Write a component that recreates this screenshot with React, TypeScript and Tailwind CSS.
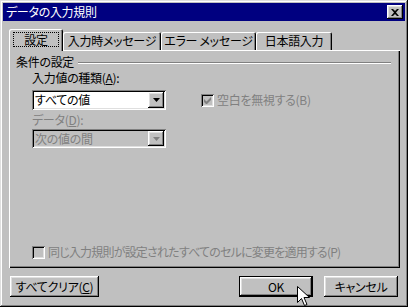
import React from "react";

const raised =
  "shadow-[inset_-1px_-1px_#000000,inset_1px_1px_#ffffff,inset_-2px_-2px_#808080,inset_2px_2px_#dfdfdf]";
const sunken =
  "shadow-[inset_1px_1px_#808080,inset_-1px_-1px_#ffffff,inset_2px_2px_#000000,inset_-2px_-2px_#dfdfdf]";

function Arrow({ disabled }: { disabled?: boolean }) {
  return (
    <svg width="7" height="4" viewBox="0 0 7 4">
      <path d="M0 0h7L3.5 4z" fill={disabled ? "#808080" : "#000"} />
    </svg>
  );
}

function Combo({ value, disabled }: { value: string; disabled?: boolean }) {
  return (
    <div
      className={`w-[134px] flex items-center p-[2px] ${sunken} ${
        disabled ? "h-[19px] bg-[#c0c0c0] text-[#808080]" : "h-[20px] bg-white text-black"
      }`}
    >
      <span className="flex-1 pl-[1px] leading-[14px]">{value}</span>
      <div className={`w-[16px] h-full bg-[#c0c0c0] flex items-center justify-center ${raised}`}>
        <Arrow disabled={disabled} />
      </div>
    </div>
  );
}

function Check({ checked }: { checked?: boolean }) {
  return (
    <div className={`w-[13px] h-[13px] bg-[#c0c0c0] flex items-center justify-center ${sunken}`}>
      {checked && (
        <svg width="7" height="7" viewBox="0 0 7 7">
          <path d="M0 2v3l2 2h1l4-4V0L2.5 4.5z" fill="#808080" />
        </svg>
      )}
    </div>
  );
}

function Tab({ label, w }: { label: string; w: string }) {
  return (
    <div
      className={`${w} h-[18px] flex items-center justify-center rounded-t-[2px] shadow-[inset_1px_1px_#ffffff,inset_-1px_0_#000000,inset_-2px_0_#808080]`}
    >
      {label}
    </div>
  );
}

function Button({ children, def, w }: { children: React.ReactNode; def?: boolean; w: string }) {
  return (
    <div className={`${w} h-[21px] ${def ? "border border-black" : ""}`}>
      <div className={`w-full h-full flex items-center justify-center ${raised}`}>{children}</div>
    </div>
  );
}

export default function App() {
  return (
    <div className="relative w-[408px] h-[307px] bg-[#c0c0c0] p-[3px] flex flex-col text-[12px] leading-[14px] tracking-[-0.3px] text-black font-['Noto_Sans_CJK_JP',sans-serif] [font-feature-settings:'palt'] shadow-[inset_-1px_-1px_#000000,inset_1px_1px_#dfdfdf,inset_-2px_-2px_#808080,inset_2px_2px_#ffffff]">
      {/* title bar */}
      <div className="h-[18px] bg-[#000080] flex items-center justify-between pl-[3px] pr-[2px]">
        <span className="text-white">データの入力規則</span>
        <div className={`w-[16px] h-[14px] bg-[#c0c0c0] flex items-center justify-center ${raised}`}>
          <svg width="8" height="7" viewBox="0 0 8 7">
            <path d="M0 0h2l2 2 2-2h2L5 3.5 8 7H6L4 5 2 7H0l3-3.5z" fill="#000" />
          </svg>
        </div>
      </div>

      {/* tabs */}
      <div className="mt-[8px] ml-[6px] h-[21px] flex items-end">
        <div className="relative z-10 -mb-[1px] w-[54px] h-[22px] bg-[#c0c0c0] rounded-t-[2px] flex items-start justify-center pt-[3px] shadow-[inset_1px_1px_#ffffff,inset_-1px_0_#000000,inset_-2px_0_#808080]">
          <span className="border border-dotted border-black px-[10px] h-[15px] leading-[13px]">設定</span>
        </div>
        <Tab label="入力時メッセージ" w="w-[98px]" />
        <Tab label="エラー メッセージ" w="w-[95px]" />
        <Tab label="日本語入力" w="w-[76px]" />
      </div>

      {/* panel */}
      <div className="ml-[6px] w-[391px] h-[218px] flex flex-col pt-[5px] pb-[9px] shadow-[inset_1px_1px_#ffffff,inset_-1px_-1px_#000000,inset_-2px_-2px_#808080]">
        <div className="flex items-center pl-[7px] pr-[9px]">
          <span>条件の設定</span>
          <div className="flex-1 ml-[4px] mt-[2px] h-[2px] border-t border-t-[#808080] border-b border-b-white" />
        </div>
        <div className="pl-[23px] flex flex-col">
          <span className="mt-[2px]">
            入力値の種類(<u>A</u>):
          </span>
          <div className="mt-[5px] flex items-center">
            <Combo value="すべての値" />
            <div className="ml-[35px] flex items-center gap-[3px] text-[#808080]">
              <Check checked />
              <span>空白を無視する(B)</span>
            </div>
          </div>
          <span className="mt-[3px] text-[#808080]">
            データ(<u>D</u>):
          </span>
          <div className="mt-[2px]">
            <Combo value="次の値の間" disabled />
          </div>
        </div>
        <div className="mt-auto pl-[23px] flex items-center gap-[3px] text-[#808080]">
          <Check />
          <span className="tracking-[-0.8px]">同じ入力規則が設定されたすべてのセルに変更を適用する(P)</span>
        </div>
      </div>

      {/* buttons */}
      <div className="mt-[8px] flex items-center pl-[7px] pr-[7px]">
        <Button w="w-[89px]">
          すべてクリア(<u>C</u>)
        </Button>
        <div className="flex-1" />
        <Button w="w-[74px]" def>
          OK
        </Button>
        <div className="w-[11px]" />
        <Button w="w-[74px]">キャンセル</Button>
      </div>

      {/* mouse cursor */}
      <svg className="absolute left-[297px] top-[286px]" width="13" height="21" viewBox="0 0 13 21">
        <path d="M0.5 0.5v16l4-4 3 7 2.5-1-3-7h5.5z" fill="#fff" stroke="#000" strokeWidth="1" />
      </svg>
    </div>
  );
}
